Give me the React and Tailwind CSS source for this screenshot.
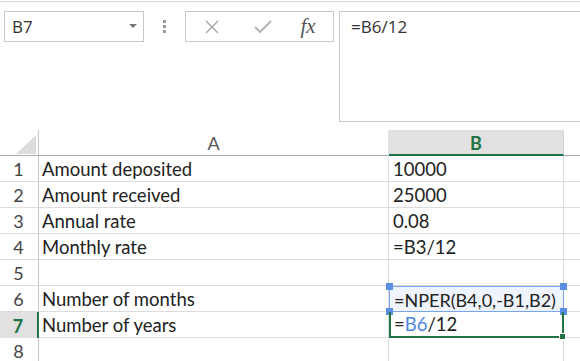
const rows = [
  { n: 1, a: "Amount deposited", b: "10000" },
  { n: 2, a: "Amount received", b: "25000" },
  { n: 3, a: "Annual rate", b: "0.08" },
  { n: 4, a: "Monthly rate", b: "=B3/12" },
  { n: 5, a: "", b: "" },
  { n: 6, a: "Number of months", b: "=NPER(B4,0,-B1,B2)", ref: true },
  { n: 7, a: "Number of years", b: null, active: true },
  { n: 8, a: "", b: "" },
];

const Handle = ({ className }) => (
  <span className={`absolute w-[7px] h-[7px] bg-[#5b8fe3] ${className}`} />
);

export default function App() {
  return (
    <div className="w-[580px] h-[361px] overflow-hidden bg-white text-[#222]" style={{ fontFamily: "Lato, 'Open Sans', sans-serif" }}>
      <div className="h-[2px] border-b border-[#d8d8d8]" />

      {/* formula bar */}
      <div className="flex items-start pt-[9px] h-[128px]" style={{ fontFamily: "'Open Sans', 'Noto Sans', sans-serif" }}>
        <div className="ml-[4px] w-[140px] h-[31px] border border-[#c8c8c8] flex items-center justify-between pl-[7px] pr-[6px]">
          <span className="text-[17px] text-[#333]">B7</span>
          <svg width="8" height="5" viewBox="0 0 8 5"><path d="M0 0h8L4 4z" fill="#777" /></svg>
        </div>
        <div className="w-[41px] h-[31px] flex flex-col items-center justify-center gap-[2px]">
          <span className="w-[3px] h-[3px] bg-[#999]" />
          <span className="w-[3px] h-[3px] bg-[#999]" />
          <span className="w-[3px] h-[3px] bg-[#999]" />
        </div>
        <div className="w-[149px] h-[31px] border border-[#c8c8c8] flex items-center">
          <div className="w-[52px] flex justify-center">
            <svg width="16" height="16" viewBox="0 0 16 16"><path d="M2 2l12 12M14 2L2 14" stroke="#a6a6a6" strokeWidth="1.4" /></svg>
          </div>
          <div className="w-[50px] flex justify-center">
            <svg width="18" height="14" viewBox="0 0 18 14"><path d="M1 7l5 5L17 1" stroke="#b4b4b4" strokeWidth="2" fill="none" /></svg>
          </div>
          <div className="w-[40px] flex justify-center">
            <span className="text-[21px] italic text-[#555] leading-none" style={{ fontFamily: "'Liberation Serif', serif" }}>fx</span>
          </div>
        </div>
        <div className="ml-[5px] flex-1 h-[111px] border border-r-0 border-[#c8c8c8] pl-[11px] pt-[2px]">
          <span className="text-[17px] text-[#333]">=B6/12</span>
        </div>
      </div>

      {/* column headers */}
      <div className="flex h-[26px]">
        <div className="w-[39px] border-r border-[#c6c6c6] border-b border-b-[#aaa] relative">
          <svg className="absolute left-[16px] top-[5px]" width="20" height="19" viewBox="0 0 20 19"><path d="M20 0V19H0z" fill="#dcdcdc" /></svg>
        </div>
        <div className="w-[350px] border-b border-[#aaa] border-r border-r-[#e2e2e2] flex items-center justify-center pt-[2px] text-[18px] text-[#555]">A</div>
        <div className="w-[175px] bg-[#e1e1e1] border-b-2 border-[#217346] border-r border-r-[#d4d4d4] flex items-center justify-center pt-[2px] text-[18px] font-bold text-[#217346]">B</div>
        <div className="flex-1 border-b border-[#aaa]" />
      </div>

      {/* rows */}
      {rows.map((r) => (
        <div key={r.n} className="flex h-[26px]">
          <div className={`w-[39px] flex items-center justify-center pr-[1px] pt-[2px] text-[18px] border-r ${r.active ? "bg-[#e1e1e1] border-r-2 border-r-[#217346] text-[#217346] font-bold" : "border-r-[#c6c6c6] text-[#444] border-b border-b-[#dcdcdc]"}`}>
            {r.n}
          </div>
          <div className="w-[350px] flex items-center pl-[3px] pt-[3px] text-[18.5px] border-r border-b border-[#dcdcdc]">{r.a}</div>
          {r.ref ? (
            <div className="w-[175px] relative flex items-center pl-[4px] pt-[3px] text-[18px] bg-[#eef3fc] border border-[#7aa5ea]">
              {r.b}
              <Handle className="-left-[4px] -top-[4px]" />
              <Handle className="-right-[4px] -top-[4px]" />
              <Handle className="-left-[4px] -bottom-[4px]" />
              <Handle className="-right-[4px] -bottom-[4px]" />
            </div>
          ) : r.active ? (
            <div className="w-[175px] relative flex items-center pl-[3px] pt-[2px] text-[18.5px] border-2 border-t-0 border-[#217346]">
              =<span className="text-[#4f86e0]">B6</span>/12
              <span className="absolute -right-[4px] -bottom-[4px] w-[7px] h-[7px] bg-[#217346] border border-white" />
            </div>
          ) : (
            <div className="w-[175px] flex items-center pl-[4px] pt-[3px] text-[18.5px] border-r border-b border-[#dcdcdc]">{r.b}</div>
          )}
          <div className="flex-1 border-b border-[#dcdcdc]" />
        </div>
      ))}
    </div>
  );
}
